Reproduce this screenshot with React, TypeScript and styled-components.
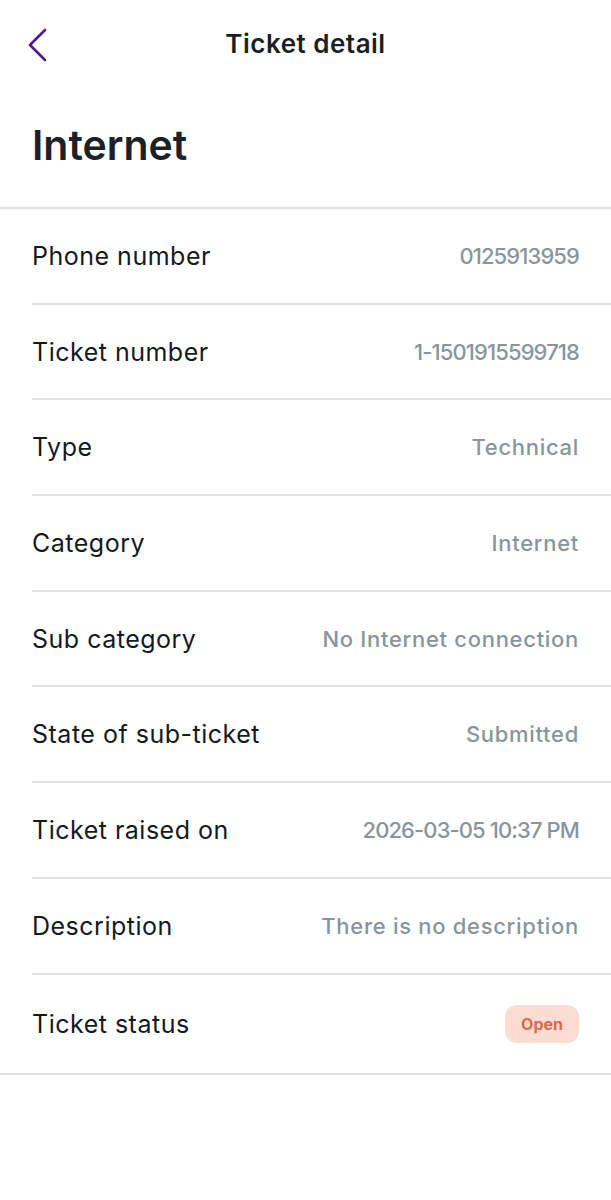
import React from 'react';
import styled, { createGlobalStyle } from 'styled-components';

const GlobalStyle = createGlobalStyle`
  html, body {
    margin: 0;
    padding: 0;
    background: #ffffff;
  }
  body {
    font-family: Inter, "Noto Sans", "Liberation Sans", sans-serif;
    -webkit-font-smoothing: antialiased;
  }
`;

const Page = styled.div`
  width: 611px;
  min-height: 1200px;
  background: #ffffff;
  color: #161b20;
`;

const TopBar = styled.header`
  position: relative;
  height: 86px;
  display: flex;
  align-items: center;
  justify-content: center;
`;

const BackButton = styled.button`
  position: absolute;
  left: 22px;
  top: 26px;
  width: 32px;
  height: 38px;
  padding: 0;
  border: none;
  background: transparent;
  display: flex;
  align-items: center;
  justify-content: center;
  color: #4b1a8f;
  cursor: pointer;

  svg {
    width: 24px;
    height: 34px;
  }
`;

const BarTitle = styled.h1`
  margin: 0;
  font-size: 26px;
  font-weight: 600;
  letter-spacing: 0.5px;
  color: #1a1f24;
`;

const Heading = styled.h2`
  margin: 0;
  padding: 34px 32px 36px;
  font-size: 41px;
  line-height: 51px;
  font-weight: 600;
  letter-spacing: 0;
  color: #1b2127;
  border-bottom: 2px solid #dfe1e4;
`;

const List = styled.div`
  display: flex;
  flex-direction: column;
  border-bottom: 2px solid #dfe1e4;
`;

const Row = styled.div<{ $last?: boolean; $tall?: boolean }>`
  height: ${(p) => (p.$tall ? '98px' : '93.7px')};
  margin-left: 32px;
  padding-right: 32px;
  display: flex;
  align-items: center;
  justify-content: space-between;
  gap: 16px;
  border-bottom: ${(p) => (p.$last ? 'none' : '2px solid #e1e3e6')};
`;

const Label = styled.span`
  font-size: 25px;
  font-weight: 400;
  letter-spacing: 0.5px;
  color: #15191d;
  white-space: nowrap;
`;

const Value = styled.span<{ $numeric?: boolean }>`
  font-size: 22px;
  font-weight: 500;
  letter-spacing: ${(p) => (p.$numeric ? '-0.9px' : '0.7px')};
  color: #8b949a;
  text-align: right;
  white-space: nowrap;
`;

const Badge = styled.span`
  display: inline-flex;
  align-items: center;
  justify-content: center;
  height: 38px;
  padding: 0 16px;
  border-radius: 12px;
  background: #fcdcd3;
  color: #e0684c;
  font-size: 16px;
  font-weight: 700;
`;

const details: { label: string; value: string; numeric?: boolean }[] = [
  { label: 'Phone number', value: '0125913959', numeric: true },
  { label: 'Ticket number', value: '1-1501915599718', numeric: true },
  { label: 'Type', value: 'Technical' },
  { label: 'Category', value: 'Internet' },
  { label: 'Sub category', value: 'No Internet connection' },
  { label: 'State of sub-ticket', value: 'Submitted' },
  { label: 'Ticket raised on', value: '2026-03-05 10:37 PM', numeric: true },
  { label: 'Description', value: 'There is no description' },
];

export default function App() {
  return (
    <Page>
      <GlobalStyle />
      <TopBar>
        <BackButton aria-label="Back">
          <svg viewBox="0 0 24 34" fill="none">
            <path
              d="M19 2L4 17l15 15"
              stroke="currentColor"
              strokeWidth="2.6"
              strokeLinecap="round"
              strokeLinejoin="round"
            />
          </svg>
        </BackButton>
        <BarTitle>Ticket detail</BarTitle>
      </TopBar>
      <Heading>Internet</Heading>
      <List>
        {details.map((d) => (
          <Row key={d.label}>
            <Label>{d.label}</Label>
            <Value $numeric={d.numeric}>{d.value}</Value>
          </Row>
        ))}
        <Row $last $tall>
          <Label>Ticket status</Label>
          <Badge>Open</Badge>
        </Row>
      </List>
    </Page>
  );
}
